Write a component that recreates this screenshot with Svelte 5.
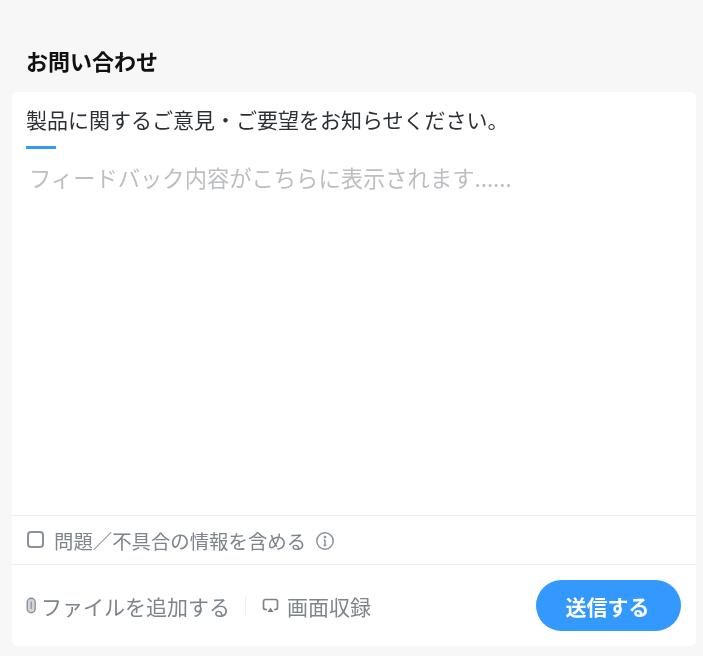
<script lang="ts">
	let includeInfo = $state(false);
</script>

<div class="page">
	<h1>お問い合わせ</h1>
	<div class="card">
		<div class="body">
			<p class="intro">製品に関するご意見・ご要望をお知らせください。</p>
			<div class="accent"></div>
			<p class="placeholder">フィードバック内容がこちらに表示されます......</p>
		</div>
		<label class="check-row">
			<input type="checkbox" bind:checked={includeInfo} />
			<span>問題／不具合の情報を含める</span>
			<svg class="info" width="20" height="20" viewBox="0 0 20 20" fill="none" stroke="#8a9199" stroke-width="1.5">
				<circle cx="10" cy="10" r="8.2" />
				<path d="M10 9v5.5M8.6 14.5h2.8M8.8 9H10" />
				<circle cx="10" cy="6" r="0.6" fill="#8a9199" />
			</svg>
		</label>
		<div class="actions">
			<button type="button" class="link">
				<svg width="11" height="17" viewBox="0 0 11 17" fill="#d3d6da" stroke="#8a9199" stroke-width="1.4">
					<rect x="1.2" y="1.2" width="8" height="14.6" rx="4" />
					<path d="M5.2 4.5v7.5" stroke-width="1.2" />
				</svg>
				<span>ファイルを追加する</span>
			</button>
			<span class="divider"></span>
			<button type="button" class="link record">
				<svg width="17" height="16" viewBox="0 0 17 16" fill="none" stroke="#7c848c" stroke-width="1.7">
					<path d="M5 11.5H3.5a2 2 0 0 1-2-2V3.5a2 2 0 0 1 2-2h10a2 2 0 0 1 2 2v6a2 2 0 0 1-2 2H12" />
					<path d="M8.5 9.5l3 4.5h-6z" fill="#7c848c" stroke="none" />
				</svg>
				<span>画面収録</span>
			</button>
			<button type="button" class="send">送信する</button>
		</div>
	</div>
</div>

<style>
	:global(body) {
		background: #f7f7f7;
		font-family: "Noto Sans CJK JP", "Liberation Sans", sans-serif;
	}

	.page {
		display: flex;
		flex-direction: column;
		height: 656px;
		padding: 0 7px 10px 12px;
		box-sizing: border-box;
		filter: blur(0.35px);
	}

	h1 {
		margin: 0;
		padding: 45px 0 0 14px;
		height: 47px;
		font-size: 22px;
		line-height: 30px;
		font-weight: 700;
		color: #111;
	}

	.card {
		flex: 1;
		display: flex;
		flex-direction: column;
		background: #fff;
		border-radius: 5px;
	}

	.body {
		flex: 1;
		padding: 12px 14px 0;
	}

	.intro {
		margin: 0;
		font-size: 21px;
		line-height: 30px;
		color: #2c3034;
	}

	.accent {
		width: 30px;
		height: 3px;
		margin-top: 12px;
		background: #3399ff;
	}

	.placeholder {
		margin: 11px 0 0 3px;
		font-size: 22.3px;
		line-height: 34px;
		color: #bcbfc2;
	}

	.check-row {
		display: flex;
		align-items: center;
		height: 49px;
		padding-left: 15px;
		border-top: 1px solid #efefef;
		font-size: 19.4px;
		color: #7c848c;
		box-sizing: border-box;
	}

	.check-row input {
		appearance: none;
		width: 17px;
		height: 17px;
		margin: 0 10px 1px 0;
		border: 2px solid #8a9199;
		border-radius: 4px;
		box-sizing: border-box;
	}

	.info {
		margin: 2px 0 0 9px;
	}

	.actions {
		display: flex;
		align-items: center;
		height: 82px;
		padding: 0 15px 0 14px;
		border-top: 1px solid #efefef;
		box-sizing: border-box;
	}

	.link {
		display: flex;
		align-items: center;
		gap: 4px;
		padding: 0;
		border: 0;
		background: none;
		font: inherit;
		font-size: 21px;
		color: #7c848c;
	}

	.divider {
		width: 1px;
		height: 18px;
		margin: 0 16px 0 15px;
		background: #efefef;
	}

	.record {
		gap: 8px;
	}

	.send {
		margin-left: auto;
		width: 145px;
		height: 51px;
		padding: 0 8px 0 6px;
		border: 0;
		border-radius: 26px;
		background: #3399ff;
		color: #fff;
		font: inherit;
		font-size: 21px;
		font-weight: 700;
	}
</style>
